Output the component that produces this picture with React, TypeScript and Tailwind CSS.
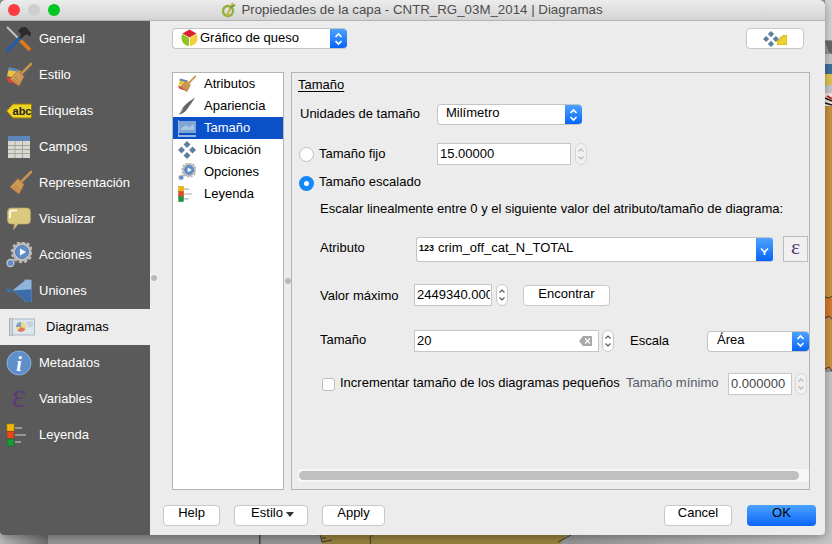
import type { ReactNode } from "react";

type IconProps = { s?: number };

function ToolsIcon({ s = 26 }: IconProps) {
  return (
    <svg width={s} height={s} viewBox="0 0 26 26" fill="none">
      <path d="M1 1L13 13" stroke="#c4c4c4" strokeWidth="2" />
      <path d="M12 12L24 24" stroke="#e8790f" strokeWidth="3.600" />
      <path d="M1.500 24.500L14 12" stroke="#2b5c9e" strokeWidth="4" strokeLinecap="round" />
      <path d="M14 12L17 9" stroke="#333" strokeWidth="2.500" />
      <path d="M12 5L15 1.500L20 1L25 7L24 11L21 8L17 10.500Z" fill="#2a2a2a" />
    </svg>
  );
}

function BrushIcon({ s = 26, color = false }: IconProps & { color?: boolean }) {
  return (
    <svg width={s} height={s} viewBox="0 0 26 26" fill="none">
      {color && <path d="M3 6L15 9L11 17L1 14Z" fill="#e8c53f" />}
      {color && <path d="M3 5L14 8L13 10L2 8Z" fill="#5f86b8" />}
      {color && <path d="M0 15L7 17L14 24L9 22L2 20Z" fill="#d8443a" />}
      <path d="M15 12L25 2" stroke="#c8924f" strokeWidth="2.600" strokeLinecap="round" />
      <path d="M12 8.500L18 14.500L13 24L4 17Z" fill="#cf9a58" stroke="#a8743a" strokeWidth="0.800" />
      <path d="M9 15L14 20M7.500 17L12 21.500" stroke="#a8743a" strokeWidth="0.800" />
    </svg>
  );
}

function AbcIcon() {
  return (
    <svg width={26} height={18} viewBox="0 0 26 18">
      <path d="M7 2H25.500V16H7L0.500 9Z" fill="#f2d21f" stroke="#8f7a10" strokeWidth="1" />
      <rect x="7" y="4.500" width="17" height="9.500" rx="1.500" fill="#ead226" />
      <text x="16" y="13" textAnchor="middle" fontSize="11" fontWeight="700" fill="#222">
        abc
      </text>
    </svg>
  );
}

function TableIcon() {
  return (
    <svg width={24} height={24} viewBox="0 0 24 24">
      <rect x="1" y="1" width="22" height="22" fill="#d8d8d0" />
      <rect x="1" y="1" width="22" height="5" fill="#5f86b8" />
      <path d="M1 10.500H23M1 14.500H23M1 18.500H23" stroke="#a5a59c" strokeWidth="1" />
      <path d="M8 6V23M15.500 6V23" stroke="#a5a59c" strokeWidth="1" />
    </svg>
  );
}

function BubbleIcon() {
  return (
    <svg width={24} height={24} viewBox="0 0 24 24">
      <path d="M4 1H20Q23.500 1 23.500 5V13Q23.500 17 20 17H11L6.500 22.500L7.500 17H4Q0.500 17 0.500 13V5Q0.500 1 4 1Z" fill="#dcc980" stroke="#b9a65c" strokeWidth="0.700" />
      <path d="M3 11V6Q3 3.500 6 3.500H10" stroke="#fff" strokeWidth="1.600" fill="none" />
    </svg>
  );
}

function GearIcon({ s = 26 }: IconProps) {
  return (
    <svg width={s} height={s} viewBox="0 0 26 26" fill="none">
      <circle cx="16" cy="10" r="8.500" stroke="#b9b9b9" strokeWidth="2" fill="#d5d5d5" />
      <circle cx="16" cy="10" r="10" stroke="#b9b9b9" strokeWidth="2.500" strokeDasharray="3 2.200" />
      <circle cx="16" cy="10" r="6.500" fill="#5f8fca" stroke="#3c659c" strokeWidth="0.800" />
      <path d="M14 6.500L20 10L14 13.500Z" fill="#fff" />
      <path d="M9 16L6 19" stroke="#aaa" strokeWidth="1.500" />
      <circle cx="4.500" cy="21" r="3.500" fill="#5f8fca" stroke="#c8c8c8" strokeWidth="1.300" />
    </svg>
  );
}

function JoinIcon() {
  return (
    <svg width={28} height={26} viewBox="0 0 28 26">
      <circle cx="3" cy="12.500" r="2.500" fill="#3f6fa8" />
      <path d="M7 12.500L20 2V0.500L27.500 1V24.500L20 25V23Z" fill="#8fb4dc" />
      <path d="M7 12.500L27.500 11V24.500L20 25V23Z" fill="#3d6ca8" />
    </svg>
  );
}

function DiagramIcon({ s = 26 }: IconProps) {
  return (
    <svg width={s} height={s} viewBox="0 0 26 26">
      <rect x="0.500" y="5" width="25" height="16" fill="#dbe6ee" stroke="#a9b8c3" />
      <rect x="0.500" y="4.500" width="3" height="17" fill="#d2d2d2" stroke="#a5a5a5" strokeWidth="0.600" />
      <path d="M17 8L24 7V12L20 14Z" fill="#c4d1d8" />
      <circle cx="12" cy="13" r="5" fill="#ecd97a" />
      <path d="M12 13V8A5 5 0 0 0 7 13Z" fill="#7f9fc8" />
      <path d="M12 13L16.500 15A5 5 0 0 1 8.500 16.500Z" fill="#dd7a6a" />
    </svg>
  );
}

function SizeIcon() {
  return (
    <svg width={18} height={18} viewBox="0 0 18 18">
      <rect x="1" y="2" width="17" height="12" fill="#7ea5d5" />
      <path d="M3 9L8 6L11 8L16 5V11H3Z" fill="#a9c5e4" />
      <path d="M0 1V17H18" stroke="#c8d6e8" strokeWidth="1.500" fill="none" />
    </svg>
  );
}

function InfoIcon() {
  return (
    <svg width={26} height={26} viewBox="0 0 26 26">
      <circle cx="13" cy="13" r="12" fill="#5f8fca" stroke="#8db0da" strokeWidth="1" />
      <text x="13" y="21" textAnchor="middle" fontSize="20" fontWeight="700" fontStyle="italic" fontFamily="'Liberation Serif', serif" fill="#fff">
        i
      </text>
    </svg>
  );
}

function LegendIcon({ s = 26 }: IconProps) {
  return (
    <svg width={s} height={s} viewBox="0 0 26 26">
      <rect x="1" y="2" width="7" height="7" fill="#f2b705" stroke="#b78b00" strokeWidth="0.600" />
      <rect x="1" y="9.500" width="7" height="7" fill="#e2491d" stroke="#a63410" strokeWidth="0.600" />
      <rect x="1" y="17" width="7" height="7" fill="#1c9a3a" stroke="#0f6a26" strokeWidth="0.600" />
      <path d="M9 6H16M9 13H20M9 20H15" stroke="#a9a9a9" strokeWidth="1.600" />
    </svg>
  );
}

function BrushThinIcon() {
  return (
    <svg width={18} height={18} viewBox="0 0 18 18">
      <path d="M17 0.500C12 4 6 8 4 12C3 14 2 16 1 17.500C5 17 8 14 10 11C12 8 15 4 17 0.500Z" fill="#666" />
      <path d="M1 17.500C3 16 4 14 5 11.500" stroke="#bbb" strokeWidth="0.800" fill="none" />
    </svg>
  );
}

function MoveIcon({ s = 18 }: IconProps) {
  return (
    <svg width={s} height={s} viewBox="0 0 18 18">
      <path d="M9 0L12.500 3.500L9 7L5.500 3.500Z" fill="#5f7f9c" />
      <path d="M9 11L12.500 14.500L9 18L5.500 14.500Z" fill="#5f7f9c" />
      <path d="M0 9L3.500 5.500L7 9L3.500 12.500Z" fill="#5f7f9c" />
      <path d="M11 9L14.500 5.500L18 9L14.500 12.500Z" fill="#5f7f9c" />
    </svg>
  );
}

function PieIcon() {
  return (
    <svg width={17} height={17} viewBox="0 0 17 17">
      <path d="M8.500 8.500L1.500 4.500L8.500 0.500L15.500 4.500Z" fill="#d8232a" />
      <path d="M8 9V17C3 16.500 0.500 13 0.500 8.500C0.500 7 0.800 6 1.300 5Z" fill="#8fc31f" />
      <path d="M9 9V17C14 16.500 16.500 13 16.500 8.500C16.500 7 16.200 6 15.700 5Z" fill="#f3cf3a" />
    </svg>
  );
}

function QgisIcon() {
  return (
    <svg width={14} height={16} viewBox="0 0 14 16" fill="none">
      <circle cx="6" cy="9" r="5" stroke="#8fb33a" strokeWidth="2.400" />
      <path d="M4 15L11 1" stroke="#c6b23e" strokeWidth="2" />
      <path d="M8 6L13 3" stroke="#6e9a2a" strokeWidth="1.500" />
    </svg>
  );
}

function Updown() {
  return (
    <svg width={9} height={16} viewBox="0 0 9 16" fill="none" stroke="#fff" strokeWidth="1.700">
      <path d="M1.500 6L4.500 3L7.500 6" />
      <path d="M1.500 10L4.500 13L7.500 10" />
    </svg>
  );
}

function Select({ w, children }: { w: string; children: ReactNode }) {
  return (
    <div className={`${w} flex h-[21px] items-stretch overflow-hidden rounded-[4px] border border-[#c4c4c4] border-r-0 bg-white`}>
      <div className="flex min-w-0 flex-1 items-center pb-[2px]">{children}</div>
      <div className="flex w-[17px] items-center justify-center bg-gradient-to-b from-[#4ba2ff] to-[#0564f8]">
        <Updown />
      </div>
    </div>
  );
}

function Spinner({ disabled = false }: { disabled?: boolean }) {
  const stroke = disabled ? "#b5b5b5" : "#555";
  return (
    <div className={`flex h-[22px] w-[12px] shrink-0 items-center justify-center rounded-[6px] border ${disabled ? "border-[#d8d8d8] bg-[#f0f0f0]" : "border-[#c8c8c8] bg-white"}`}>
      <svg width={8} height={16} viewBox="0 0 8 16" fill="none" stroke={stroke} strokeWidth="1.100">
        <path d="M1.500 5.500L4 3L6.500 5.500" />
        <path d="M1.500 10.500L4 13L6.500 10.500" />
      </svg>
    </div>
  );
}

function Field({ w, children }: { w: string; children: ReactNode }) {
  return (
    <div className={`${w} flex h-[22px] shrink-0 items-center border border-[#c6c6c6] bg-white pl-[2px] pr-[1px]`}>
      <div className="min-w-0 flex-1 overflow-hidden whitespace-nowrap">{children}</div>
    </div>
  );
}

function Btn({ w, children, primary = false, lift = "pb-[2px]" }: { w: string; children: ReactNode; primary?: boolean; lift?: string }) {
  return (
    <div
      className={`${w} ${lift} flex h-[21px] shrink-0 items-center justify-center rounded-[4px] text-black ${
        primary ? "bg-gradient-to-b from-[#4ba2ff] to-[#0564f8]" : "border border-[#c8c8c8] bg-white"
      }`}
    >
      {children}
    </div>
  );
}

const sideItems: { label: string; icon: ReactNode; active?: boolean }[] = [
  { label: "General", icon: <ToolsIcon /> },
  { label: "Estilo", icon: <BrushIcon color /> },
  { label: "Etiquetas", icon: <AbcIcon /> },
  { label: "Campos", icon: <TableIcon /> },
  { label: "Representación", icon: <BrushIcon /> },
  { label: "Visualizar", icon: <BubbleIcon /> },
  { label: "Acciones", icon: <GearIcon /> },
  { label: "Uniones", icon: <JoinIcon /> },
  { label: "Diagramas", icon: <DiagramIcon />, active: true },
  { label: "Metadatos", icon: <InfoIcon /> },
  {
    label: "Variables",
    icon: <span className="-mt-[6px] font-['Liberation_Serif',serif] text-[34px] leading-none text-[#5b3a78]">ε</span>,
  },
  { label: "Leyenda", icon: <LegendIcon /> },
];

const listItems: { label: string; icon: ReactNode; active?: boolean }[] = [
  { label: "Atributos", icon: <BrushIcon s={18} color /> },
  { label: "Apariencia", icon: <BrushThinIcon /> },
  { label: "Tamaño", icon: <SizeIcon />, active: true },
  { label: "Ubicación", icon: <MoveIcon /> },
  { label: "Opciones", icon: <GearIcon s={18} /> },
  { label: "Leyenda", icon: <LegendIcon s={18} /> },
];

function Backdrop() {
  return (
    <svg className="absolute inset-0" width={832} height={544} viewBox="0 0 832 544">
      <defs>
        <linearGradient id="leftFade" x1="0" x2="1" y1="0" y2="0">
          <stop offset="0" stopColor="#bdbdbd" />
          <stop offset="1" stopColor="#6f6f6f" />
        </linearGradient>
        <linearGradient id="rightFade" x1="0" x2="1" y1="0" y2="0">
          <stop offset="0" stopColor="#969696" />
          <stop offset="1" stopColor="#c8c8c8" />
        </linearGradient>
      </defs>
      <rect width="832" height="544" fill="#969696" />
      <rect x="571" y="530" width="261" height="14" fill="url(#rightFade)" />
      <rect x="0" y="530" width="48" height="14" fill="url(#leftFade)" />
      <rect x="259" y="530" width="1.500" height="14" fill="#444" />
      <path d="M320 530H571L560 544H322Z" fill="#97823f" />
      <path d="M320 535L322 542L332 540M322 538H326M372 535C368 538 372 541 370 544M571 535L558 542" stroke="#222" strokeWidth="0.800" fill="none" />
      <rect x="825" y="0" width="7" height="40" fill="#d4d4d4" />
      <path d="M825 41H832V54L829 52Z" fill="#666" />
      <rect x="825" y="54" width="7" height="10" fill="#c8c8c8" />
      <rect x="825" y="64" width="7" height="10" fill="#3f6f9e" />
      <rect x="825" y="74" width="7" height="11" fill="#e2c253" />
      <rect x="825" y="85" width="7" height="8" fill="#c8c8c8" />
      <rect x="825" y="93" width="7" height="13" fill="#f0e8e0" />
      <path d="M825 98L832 101M825 103L832 105" stroke="#1a1a1a" strokeWidth="1.500" />
      <path d="M827 96L832 99" stroke="#c8232a" strokeWidth="2" />
      <rect x="825" y="106" width="7" height="212" fill="#c9933f" />
      <path d="M825 298H832V318H825Z" fill="#d27a30" />
      <path d="M825 297L829 298L832 296M825 318L829 316L832 319" stroke="#222" strokeWidth="0.800" fill="none" />
      <rect x="825" y="319" width="7" height="50" fill="#c9933f" />
      <path d="M825 369L829 367L832 371" stroke="#222" strokeWidth="0.800" fill="none" />
      <rect x="825" y="372" width="7" height="172" fill="#c6c6c6" />
    </svg>
  );
}

export default function App() {
  return (
    <div className="relative h-[544px] w-[832px] overflow-hidden font-['Liberation_Sans',Arial,sans-serif] text-[13px] text-black">
      <Backdrop />
      <div className="relative flex h-[535px] w-[825px] flex-col overflow-hidden rounded-t-[6px] rounded-b-[4px] bg-[#ececec] shadow-[0_2px_10px_rgba(0,0,0,0.35)]">
        <div className="relative flex h-[21px] shrink-0 items-center justify-center gap-[5px] border-b border-[#b4b4b4] bg-gradient-to-b from-[#ececec] to-[#d4d4d4] text-[13.3px] text-[#4c4c4c]">
          <div className="absolute top-[4px] left-[8px] flex gap-[8px]">
            <div className="h-[12px] w-[12px] rounded-full bg-[#fc3c40]" />
            <div className="h-[12px] w-[12px] rounded-full bg-[#cecece]" />
            <div className="h-[12px] w-[12px] rounded-full bg-[#00c822]" />
          </div>
          <QgisIcon />
          <span>Propiedades de la capa - CNTR_RG_03M_2014 | Diagramas</span>
        </div>

        <div className="flex min-h-0 flex-1">
          <div className="flex w-[150px] shrink-0 flex-col bg-[#5a5a5a] text-white">
            {sideItems.map((item) => (
              <div
                key={item.label}
                className={`flex h-[36px] shrink-0 items-center ${item.active ? "bg-[#ececec] pl-[9px] text-black" : ""}`}
              >
                <div className={`flex h-[26px] w-[26px] shrink-0 items-center justify-center ${item.active ? "" : "ml-[6px]"}`}>
                  {item.icon}
                </div>
                <span className={item.active ? "ml-[11px]" : "ml-[7px]"}>{item.label}</span>
              </div>
            ))}
          </div>

          <div className="relative flex min-w-0 flex-1 flex-col pt-[7px]">
            <div className="absolute top-[252px] left-0 flex h-[9px] w-[7px] items-center justify-center bg-[#f2f2f2]">
              <div className="h-[6px] w-[6px] rounded-full bg-[#b9b9b9]" />
            </div>

            <div className="ml-[22px] flex h-[21px] shrink-0 items-center">
              <Select w="w-[175px]">
                <div className="ml-[8px] flex items-center gap-[2px]">
                  <PieIcon />
                  <span>Gráfico de queso</span>
                </div>
              </Select>
              <div className="ml-[399px] flex h-[21px] w-[58px] items-center justify-center rounded-[4px] border border-[#c8c8c8] bg-white pr-[1px]">
                <MoveIcon s={16} />
                <svg width={10} height={10} viewBox="0 0 10 10" className="mt-[3px] -ml-[2px]">
                  <path d="M0 5H3V2H6V0H10V10H0Z" fill="#efd02c" stroke="#c4a810" strokeWidth="0.700" />
                </svg>
              </div>
            </div>

            <div className="mt-[23px] ml-[22px] flex h-[418px] shrink-0">
              <div className="w-[112px] shrink-0 border border-[#b4b4b4] bg-white">
                {listItems.map((item) => (
                  <div
                    key={item.label}
                    className={`flex h-[22px] items-center pl-[5px] ${item.active ? "bg-[#0a50c8] text-white" : ""}`}
                  >
                    <div className="flex h-[18px] w-[18px] shrink-0 items-center justify-center">{item.icon}</div>
                    <span className="ml-[8px] pb-[1px]">{item.label}</span>
                  </div>
                ))}
              </div>

              <div className="flex w-[7px] shrink-0 items-center justify-center">
                <div className="h-[6px] w-[6px] rounded-full bg-[#b9b9b9]" />
              </div>

              <div className="flex w-[519px] shrink-0 flex-col border border-[#b4b4b4] pl-[6px]">
                <div className="mt-[4px] h-[16px] leading-[16px] underline underline-offset-2">Tamaño</div>

                <div className="mt-[11px] flex h-[21px] items-center pl-[2px]">
                  <span className="w-[137px] pb-[1px]">Unidades de tamaño</span>
                  <Select w="w-[145px]">
                    <span className="ml-[8px] pb-[1px]">Milímetro</span>
                  </Select>
                </div>

                <div className="mt-[18px] flex h-[22px] items-center pl-[1px]">
                  <div className="h-[15px] w-[15px] rounded-full border border-[#bdbdbd] bg-white" />
                  <span className="ml-[5px] w-[118px]">Tamaño fijo</span>
                  <Field w="w-[134px]">15.00000</Field>
                  <div className="ml-[4px]">
                    <Spinner disabled />
                  </div>
                </div>

                <div className="mt-[8px] flex h-[20px] items-center pl-[1px]">
                  <div className="flex h-[15px] w-[15px] items-center justify-center rounded-full bg-[#1488fb]">
                    <div className="h-[5px] w-[5px] rounded-full bg-white" />
                  </div>
                  <span className="ml-[5px] pb-[2px]">Tamaño escalado</span>
                </div>

                <div className="mt-[8px] h-[16px] pl-[22px] leading-[16px]">
                  Escalar linealmente entre 0 y el siguiente valor del atributo/tamaño de diagrama:
                </div>

                <div className="mt-[18px] flex h-[27px] items-center pl-[22px]">
                  <span className="w-[96px] pb-[2px]">Atributo</span>
                  <div className="mt-[2px] flex h-[25px] w-[357px] items-stretch overflow-hidden rounded-[3px] border border-[#c4c4c4] border-r-0 bg-white">
                    <div className="flex flex-1 items-center pb-[4px] pl-[2px]">
                      <span className="mt-[2px] text-[9px] font-bold">123</span>
                      <span className="ml-[4px]">crim_off_cat_N_TOTAL</span>
                    </div>
                    <div className="flex w-[17px] items-center justify-center bg-gradient-to-b from-[#4ba2ff] to-[#0564f8]">
                      <svg width={9} height={9} viewBox="0 0 9 9" fill="none" stroke="#fff" strokeWidth="1.700" className="mt-[4px]">
                        <path d="M1 1.500L4.500 5L8 1.500M4.500 5V8" />
                      </svg>
                    </div>
                  </div>
                  <div className="ml-[10px] flex h-[26px] w-[25px] items-center justify-center border border-[#bdbdbd] bg-[#f0f0f0] pb-[4px] font-['Liberation_Serif',serif] text-[22px] leading-none text-[#5b3a78]">
                    ε
                  </div>
                </div>

                <div className="mt-[22px] flex h-[22px] items-center pl-[22px]">
                  <span className="w-[94px] pt-[1px]">Valor máximo</span>
                  <Field w="w-[78px]">2449340.000</Field>
                  <div className="ml-[4px]">
                    <Spinner />
                  </div>
                  <div className="ml-[15px]">
                    <Btn w="w-[87px]">Encontrar</Btn>
                  </div>
                </div>

                <div className="mt-[24px] flex h-[22px] items-center pl-[22px]">
                  <span className="w-[94px] pb-[2px]">Tamaño</span>
                  <div className="flex h-[22px] w-[185px] shrink-0 items-center justify-between border border-[#c6c6c6] bg-white pr-[6px] pl-[2px]">
                    <span>20</span>
                    <svg width={13} height={10} viewBox="0 0 13 10">
                      <path d="M4 0H13V10H4L0 5Z" fill="#a8a8a8" />
                      <path d="M6 2.500L11 7.500M11 2.500L6 7.500" stroke="#fff" strokeWidth="1.200" />
                    </svg>
                  </div>
                  <div className="ml-[3px]">
                    <Spinner />
                  </div>
                  <span className="ml-[16px] w-[77px] pb-[1px]">Escala</span>
                  <Select w="w-[102px]">
                    <span className="ml-[9px] pb-[1px]">Área</span>
                  </Select>
                </div>

                <div className="mt-[21px] flex h-[22px] items-center pl-[24px]">
                  <div className="h-[13px] w-[13px] shrink-0 rounded-[3px] border border-[#bdbdbd] bg-white" />
                  <span className="ml-[5px] w-[286px] whitespace-nowrap pb-[2px]">Incrementar tamaño de los diagramas pequeños</span>
                  <span className="w-[102px] whitespace-nowrap pb-[2px] text-[#555a66]">Tamaño mínimo</span>
                  <Field w="w-[64px]">
                    <span className="text-[#444]">0.000000</span>
                  </Field>
                  <div className="ml-[3px]">
                    <Spinner disabled />
                  </div>
                </div>

                <div className="flex-1" />
                <div className="mb-[7px] flex h-[13px] items-center bg-[#f6f6f6] pl-[1px]">
                  <div className="h-[9px] w-[500px] rounded-full bg-[#c0c0c0]" />
                </div>
              </div>
            </div>

            <div className="mt-[15px] flex h-[21px] shrink-0 items-center pr-[9px] pl-[13px]">
              <Btn w="w-[57px]" lift="pb-[5px]">Help</Btn>
              <div className="ml-[14px]">
                <Btn w="w-[74px]" lift="pb-[5px]">
                  <span className="ml-[3px]">Estilo</span>
                  <svg width={8} height={5} viewBox="0 0 8 5" className="mt-[3px] ml-[3px]">
                    <path d="M0 0H8L4 5Z" fill="#333" />
                  </svg>
                </Btn>
              </div>
              <div className="ml-[14px]">
                <Btn w="w-[63px]" lift="pb-[5px]">Apply</Btn>
              </div>
              <div className="flex-1" />
              <Btn w="w-[68px]" lift="pb-[5px]">Cancel</Btn>
              <div className="ml-[15px]">
                <Btn w="w-[69px]" primary lift="pb-[5px]">
                  OK
                </Btn>
              </div>
            </div>
          </div>
        </div>
      </div>
    </div>
  );
}
